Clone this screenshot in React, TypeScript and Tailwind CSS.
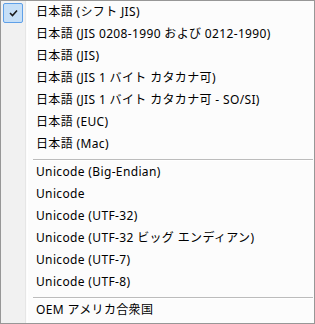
import React from "react";

const group1 = [
  "日本語 (シフト JIS)",
  "日本語 (JIS 0208-1990 および 0212-1990)",
  "日本語 (JIS)",
  "日本語 (JIS 1 バイト カタカナ可)",
  "日本語 (JIS 1 バイト カタカナ可 - SO/SI)",
  "日本語 (EUC)",
  "日本語 (Mac)",
];
const group2 = [
  "Unicode (Big-Endian)",
  "Unicode",
  "Unicode (UTF-32)",
  "Unicode (UTF-32 ビッグ エンディアン)",
  "Unicode (UTF-7)",
  "Unicode (UTF-8)",
];
const group3 = ["OEM アメリカ合衆国"];

function Row({ label, checked }: { label: string; checked?: boolean }) {
  return (
    <div className="relative flex h-[22px] items-center">
      {checked && (
        <div className="absolute left-[2px] top-[2px] flex h-[20px] w-[20px] items-center justify-center rounded-[2px] border border-[#5fa0e8] bg-[#c6dff7]">
          <svg width="9" height="8" viewBox="0 0 9 8">
            <path d="M1 4 L3.5 6.5 L8 1.5" fill="none" stroke="#1b1b1b" strokeWidth="1.6" />
          </svg>
        </div>
      )}
      <span className="pl-[35px] whitespace-nowrap text-[12px] leading-none tracking-[0.35px] text-black">{label}</span>
    </div>
  );
}

function Sep() {
  return (
    <div className="h-[6px] pt-[4px] pl-[32px] pr-[1px]">
      <div className="h-[1px] bg-[#bcbcbc]" />
      <div className="h-[1px] bg-white" />
    </div>
  );
}

export default function App() {
  return (
    <div
      className="relative h-[324px] w-[315px] overflow-hidden border border-[#979797] bg-[#fcfcfc]"
      style={{ fontFamily: '"Noto Sans", "Noto Sans CJK JP", sans-serif' }}
    >
      <div className="absolute left-0 top-0 h-full w-[25px] border-r border-[#e6e6e6] bg-[#f1f1f1]" />
      <div className="absolute left-[26px] top-0 h-full w-[1px] bg-white" />
      <div className="relative flex flex-col">
        {group1.map((l, i) => (
          <Row key={l} label={l} checked={i === 0} />
        ))}
        <Sep />
        {group2.map((l) => (
          <Row key={l} label={l} />
        ))}
        <Sep />
        {group3.map((l) => (
          <Row key={l} label={l} />
        ))}
      </div>
    </div>
  );
}
